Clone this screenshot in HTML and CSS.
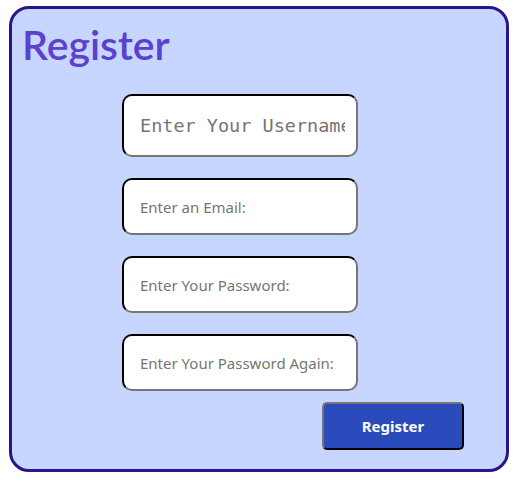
FILE: index.html
```
<!DOCTYPE html>
<html>
<head>
<meta charset="utf-8">
<link rel="stylesheet" href="styles.css">
</head>
<body>
<div class="card">
  <h1 class="title">Register</h1>
  <form class="form">
    <input class="field field-mono" type="text" placeholder="Enter Your Username">
    <input class="field" type="email" placeholder="Enter an Email:">
    <input class="field" type="password" placeholder="Enter Your Password:">
    <input class="field" type="password" placeholder="Enter Your Password Again:">
    <div class="actions">
      <button class="btn" type="button">Register</button>
    </div>
  </form>
</div>
</body>
</html>
```
FILE: styles.css
```
html, body {
  margin: 0;
  padding: 0;
  background: #ffffff;
}
.card {
  box-sizing: border-box;
  margin: 6px 0 0 9px;
  width: 500px;
  height: 466px;
  background: #c6d6ff;
  border: 3px solid #2a158a;
  border-radius: 20px;
  padding: 11px 0 0 0;
  font-family: "Noto Sans", sans-serif;
}
.title {
  margin: 0 0 0 10px;
  font-family: "Lato", "Noto Sans", sans-serif;
  font-size: 41px;
  line-height: 50px;
  font-weight: 600;
  color: #5c40cf;
}
.form {
  display: flex;
  flex-direction: column;
  gap: 21px;
  margin: 24px 0 0 110px;
  width: 342px;
}
.field {
  box-sizing: border-box;
  width: 236px;
  height: 57px;
  border: 2px inset #767676;
  border-top-color: #1a1a1a;
  border-left-color: #1a1a1a;
  border-bottom-color: #767676;
  border-right-color: #767676;
  border-radius: 10px;
  background: #ffffff;
  padding: 0 11px 0 16px;
  font-family: "Noto Sans", sans-serif;
  font-size: 15px;
  outline: none;
}
.field::placeholder {
  color: #757575;
}
.field-mono {
  height: 63px;
  font-family: "DejaVu Sans Mono", monospace;
  font-size: 18.5px;
}
.actions {
  display: flex;
  justify-content: flex-end;
  margin-top: -10px;
}
.btn {
  box-sizing: border-box;
  width: 142px;
  height: 48px;
  background: #2b4abc;
  color: #ffffff;
  border: 2px outset #767676;
  border-top-color: #767676;
  border-left-color: #767676;
  border-bottom-color: #1a1a1a;
  border-right-color: #1a1a1a;
  border-radius: 5px;
  font-family: "Noto Sans", sans-serif;
  font-weight: 700;
  font-size: 15px;
}
```
